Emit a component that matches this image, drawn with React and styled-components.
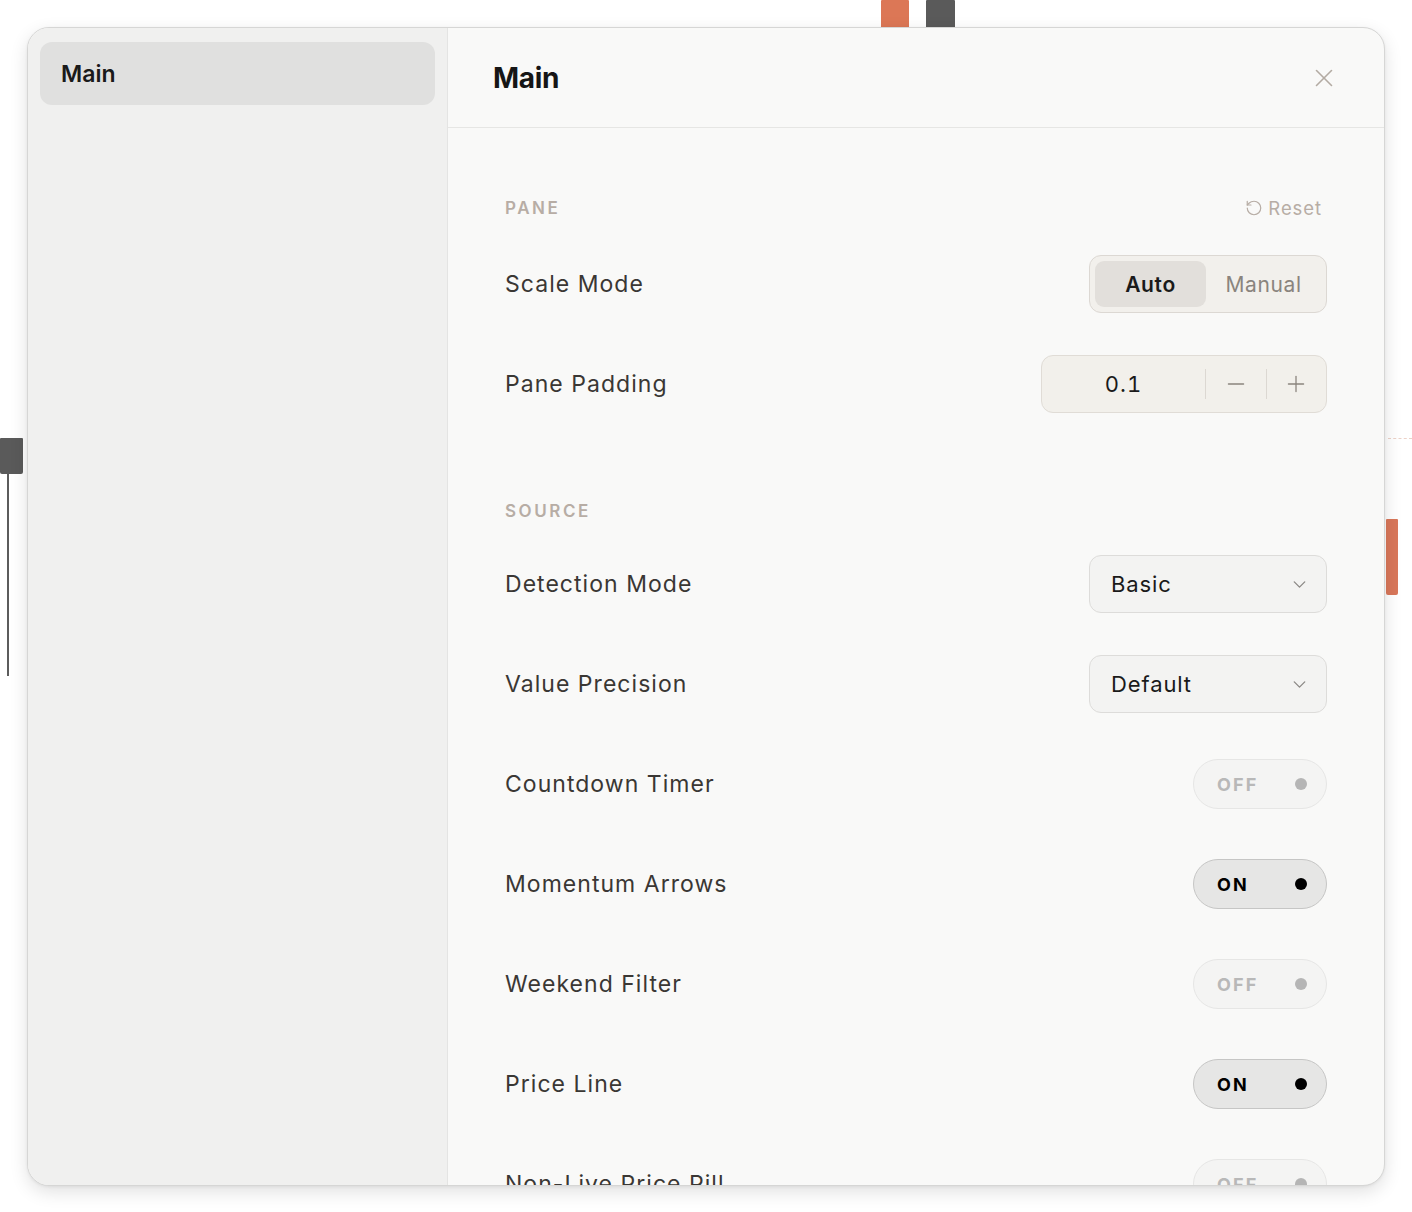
import React from "react";
import styled, { createGlobalStyle } from "styled-components";
import { X, RotateCcw, ChevronDown, Minus, Plus } from "lucide-react";

const GlobalStyle = createGlobalStyle`
	html, body {
		margin: 0;
		padding: 0;
		background: #ffffff;
		font-family: Inter, "Noto Sans", sans-serif;
		-webkit-font-smoothing: antialiased;
	}
	* {
		box-sizing: border-box;
	}
`

const paneRows = [
	{ label: "Scale Mode", kind: "segment" },
	{ label: "Pane Padding", kind: "stepper" },
]

const sourceRows = [
	{ label: "Detection Mode", kind: "select", value: "Basic" },
	{ label: "Value Precision", kind: "select", value: "Default" },
	{ label: "Countdown Timer", kind: "toggle", on: false },
	{ label: "Momentum Arrows", kind: "toggle", on: true },
	{ label: "Weekend Filter", kind: "toggle", on: false },
	{ label: "Price Line", kind: "toggle", on: true },
	{ label: "Non-Live Price Pill", kind: "toggle", on: false },
]

function Control({ row }) {
	if (row.kind === "segment") {
		return (
			<Segment>
				<SegmentOption active>Auto</SegmentOption>
				<SegmentOption>Manual</SegmentOption>
			</Segment>
		)
	}
	if (row.kind === "stepper") {
		return (
			<Stepper>
				<StepperValue>0.1</StepperValue>
				<StepperButton><Minus size={26} strokeWidth={1.2} /></StepperButton>
				<StepperButton><Plus size={26} strokeWidth={1.2} /></StepperButton>
			</Stepper>
		)
	}
	if (row.kind === "select") {
		return (
			<Select>
				<span>{ row.value }</span>
				<ChevronDown size={21} strokeWidth={1.5} color="#8a8785" />
			</Select>
		)
	}
	return (
		<Toggle on={ row.on }>
			<span>{ row.on ? "ON" : "OFF" }</span>
			<Dot on={ row.on } />
		</Toggle>
	)
}

export default function App() {
	return (
		<>
			<GlobalStyle />
			<Page>
				{/* chart pieces peeking out from behind the dialog */}
				<Backdrop>
					<Bar style={{ left: 881, top: 0, width: 28, height: 30 }} color="#dc7756" />
					<Bar style={{ left: 926, top: 0, width: 29, height: 30 }} color="#5a5a5a" />
					<Bar style={{ left: 0, top: 438, width: 23, height: 36 }} color="#5a5a5a" />
					<Wick />
					<DashLine />
					<Bar style={{ left: 1386, top: 519, width: 12, height: 76 }} color="#d9775a" />
				</Backdrop>

				<Dialog>
					<Sidebar>
						<NavItem active>Main</NavItem>
					</Sidebar>

					<Panel>
						<Header>
							<Title>Main</Title>
							<CloseButton><X size={30} strokeWidth={1.3} /></CloseButton>
						</Header>

						<Content>
							<Section>
								<SectionHeader>
									<SectionTitle>PANE</SectionTitle>
									<ResetButton>
										<RotateCcw size={18} strokeWidth={1.6} />
										Reset
									</ResetButton>
								</SectionHeader>
								{ paneRows.map(row => (
									<Row key={ row.label }>
										<Label>{ row.label }</Label>
										<Control row={ row } />
									</Row>
								)) }
							</Section>

							<Section>
								<SectionHeader>
									<SectionTitle>SOURCE</SectionTitle>
								</SectionHeader>
								{ sourceRows.map(row => (
									<Row key={ row.label }>
										<Label>{ row.label }</Label>
										<Control row={ row } />
									</Row>
								)) }
							</Section>
						</Content>
					</Panel>
				</Dialog>
			</Page>
		</>
	)
}

const Page = styled.div`
	position: relative;
	width: 1412px;
	height: 1212px;
	padding: 27px;
	overflow: hidden;
`
const Backdrop = styled.div`
	position: absolute;
	inset: 0;
`
const Bar = styled.div`
	position: absolute;
	background: ${ p => p.color };
	border-radius: 1px 1px 2px 2px;
`
const Wick = styled.div`
	position: absolute;
	left: 7px;
	top: 474px;
	width: 2px;
	height: 202px;
	background: #5c5c5c;
`
const DashLine = styled.div`
	position: absolute;
	left: 1388px;
	top: 438px;
	width: 24px;
	border-top: 1px dashed #ecd2c8;
`
const Dialog = styled.div`
	position: relative;
	display: flex;
	width: 1358px;
	height: 1159px;
	border: 1px solid #d6d6d5;
	border-radius: 22px;
	overflow: hidden;
	background: #f9f9f8;
	box-shadow: 0 6px 18px rgba(0, 0, 0, 0.12), 0 1px 3px rgba(0, 0, 0, 0.06);
`
const Sidebar = styled.div`
	flex: 0 0 420px;
	padding: 14px 12px;
	background: #f0f0ef;
	border-right: 1px solid #e4e4e3;
`
const NavItem = styled.div`
	display: flex;
	align-items: center;
	height: 63px;
	padding: 0 21px;
	border-radius: 12px;
	background: ${ p => p.active ? "#e0e0df" : "transparent" };
	color: #1a1a1a;
	font-size: 23px;
	font-weight: 600;
`
const Panel = styled.div`
	flex: 1;
	display: flex;
	flex-direction: column;
	min-width: 0;
`
const Header = styled.div`
	display: flex;
	align-items: center;
	justify-content: space-between;
	height: 100px;
	padding: 0 44px 0 45px;
	border-bottom: 1px solid #e6e6e4;
	flex-shrink: 0;
`
const Title = styled.h1`
	margin: 0;
	font-size: 28px;
	font-weight: 700;
	color: #161616;
	letter-spacing: -0.01em;
`
const CloseButton = styled.div`
	display: flex;
	align-items: center;
	justify-content: center;
	width: 32px;
	height: 32px;
	color: #b3aba3;
`
const Content = styled.div`
	flex: 1;
	overflow: hidden;
	padding: 64px 57px 0;
`
const Section = styled.div`
	& + & {
		margin-top: 64px;
	}
`
const SectionHeader = styled.div`
	display: flex;
	align-items: center;
	justify-content: space-between;
	min-height: 26px;
	margin-bottom: 10px;
`
const SectionTitle = styled.div`
	font-size: 17px;
	font-weight: 600;
	letter-spacing: 0.15em;
	color: #b7ada5;
`
const ResetButton = styled.div`
	display: flex;
	align-items: center;
	gap: 5px;
	height: 32px;
	margin-right: 5px;
	font-size: 18.5px;
	letter-spacing: 0.05em;
	color: #b7ada5;
`
const Row = styled.div`
	display: flex;
	align-items: center;
	justify-content: space-between;
	height: 100px;
`
const Label = styled.div`
	font-size: 23px;
	color: #3a3734;
	letter-spacing: 0.045em;
`
const Segment = styled.div`
	display: flex;
	align-items: center;
	width: 238px;
	height: 58px;
	padding: 5px;
	border: 1.5px solid #dcd8d3;
	border-radius: 12px;
	background: #f2f0ec;
`
const SegmentOption = styled.div`
	display: flex;
	align-items: center;
	justify-content: center;
	flex: ${ p => p.active ? "0 0 111px" : "1" };
	height: 100%;
	border-radius: 9px;
	background: ${ p => p.active ? "#e2dfdb" : "transparent" };
	color: ${ p => p.active ? "#1a1a1a" : "#8a847e" };
	font-size: 21px;
	font-weight: ${ p => p.active ? 600 : 400 };
	letter-spacing: 0.03em;
`
const Stepper = styled.div`
	display: flex;
	align-items: center;
	width: 286px;
	height: 58px;
	border: 1.5px solid #e0dcd6;
	border-radius: 12px;
	background: #f2f0eb;
`
const StepperValue = styled.div`
	flex: 0 0 163px;
	text-align: center;
	font-size: 22px;
	font-variant-numeric: tabular-nums;
	letter-spacing: 0.05em;
	color: #1a1a1a;
`
const StepperButton = styled.div`
	display: flex;
	align-items: center;
	justify-content: center;
	flex: 1;
	height: 30px;
	border-left: 1.5px solid #dcd8d2;
	color: #8a847e;
`
const Select = styled.div`
	display: flex;
	align-items: center;
	justify-content: space-between;
	width: 238px;
	height: 58px;
	padding: 0 16px 0 21px;
	border: 1.5px solid #dddcda;
	border-radius: 12px;
	background: #f3f3f2;
	font-size: 22px;
	letter-spacing: 0.04em;
	color: #1a1a1a;
`
const Toggle = styled.div`
	display: flex;
	align-items: center;
	justify-content: space-between;
	width: 134px;
	height: 50px;
	padding: 0 19px 0 23px;
	border-radius: 25px;
	border: 1.5px solid ${ p => p.on ? "#c6c6c5" : "#e6e6e5" };
	background: ${ p => p.on ? "#e6e6e5" : "#f4f4f3" };
	color: ${ p => p.on ? "#000000" : "#b8b8b8" };
	font-size: 18px;
	font-weight: 700;
	letter-spacing: 0.12em;
`
const Dot = styled.div`
	width: 12px;
	height: 12px;
	border-radius: 50%;
	background: ${ p => p.on ? "#000000" : "#b5b5b5" };
`
